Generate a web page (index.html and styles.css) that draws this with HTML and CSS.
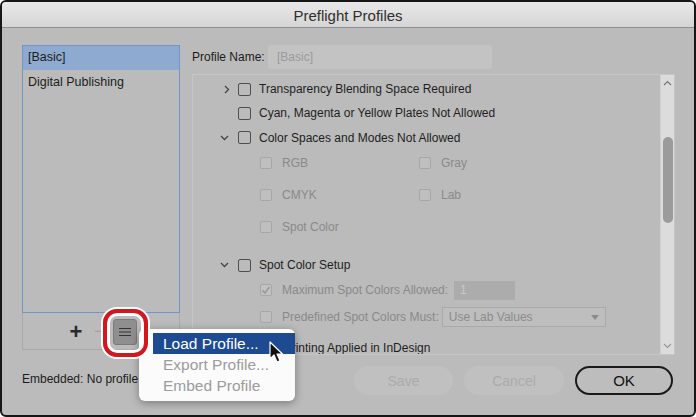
FILE: index.html
```html
<!DOCTYPE html>
<html lang="en">
<head>
  <meta charset="UTF-8">
  <title>Preflight Profiles</title>
  <link rel="stylesheet" href="styles.css">
</head>
<body>

<div class="dialog">
  <div class="titlebar">Preflight Profiles</div>

  <div class="main">
    <div class="left-col">
      <div class="profile-list">
        <div class="list-row selected">[Basic]</div>
        <div class="list-row">Digital Publishing</div>
      </div>
      <div class="list-tools">
        <span class="tool-plus">+</span>
        <span class="tool-minus">&minus;</span>
        <span class="tool-menu">
          <svg width="14" height="10" viewBox="0 0 14 10"><path d="M1 1.5h12M1 5h12M1 8.5h12" stroke="#333" stroke-width="1.2"/></svg>
        </span>
      </div>
      <div class="embedded">Embedded: No profile</div>
    </div>

    <div class="right-col">
      <div class="name-row">
        <label class="name-label">Profile Name:</label>
        <div class="name-field">[Basic]</div>
      </div>

      <div class="panel">
        <div class="panel-content">
          <div class="row r1">
            <span class="chev closed"><svg width="6" height="9" viewBox="0 0 6 9"><path d="M1 1l3.5 3.5L1 8" fill="none" stroke="#444" stroke-width="1.3"/></svg></span>
            <span class="cb"></span>
            <span class="label">Transparency Blending Space Required</span>
          </div>
          <div class="row r2">
            <span class="chev"></span>
            <span class="cb"></span>
            <span class="label">Cyan, Magenta or Yellow Plates Not Allowed</span>
          </div>
          <div class="row r3">
            <span class="chev"><svg width="9" height="6" viewBox="0 0 9 6"><path d="M1 1l3.5 3.5L8 1" fill="none" stroke="#444" stroke-width="1.3"/></svg></span>
            <span class="cb"></span>
            <span class="label">Color Spaces and Modes Not Allowed</span>
          </div>

          <div class="sub-grid">
            <div class="sub-item"><span class="cb small off"></span><span class="dim">RGB</span></div>
            <div class="sub-item"><span class="cb small off"></span><span class="dim">Gray</span></div>
            <div class="sub-item"><span class="cb small off"></span><span class="dim">CMYK</span></div>
            <div class="sub-item"><span class="cb small off"></span><span class="dim">Lab</span></div>
            <div class="sub-item"><span class="cb small off"></span><span class="dim">Spot Color</span></div>
          </div>

          <div class="row r-spot">
            <span class="chev"><svg width="9" height="6" viewBox="0 0 9 6"><path d="M1 1l3.5 3.5L8 1" fill="none" stroke="#444" stroke-width="1.3"/></svg></span>
            <span class="cb"></span>
            <span class="label">Spot Color Setup</span>
          </div>
          <div class="sub-row r-max">
            <span class="cb small off checked">
              <svg width="10" height="9" viewBox="0 0 10 9"><path d="M1.5 4.5l2.5 2.5 4.5-6" fill="none" stroke="#9c9c9c" stroke-width="1.8"/></svg>
            </span>
            <span class="dim">Maximum Spot Colors Allowed:</span>
            <span class="num-field">1</span>
          </div>
          <div class="sub-row r-pre">
            <span class="cb small off"></span>
            <span class="dim">Predefined Spot Colors Must:</span>
            <span class="select-field">Use Lab Values
              <svg width="8" height="5" viewBox="0 0 8 5"><path d="M0 0h8L4 5z" fill="#8c8c8c"/></svg>
            </span>
          </div>
          <div class="row r-over">
            <span class="chev"></span>
            <span class="cb"></span>
            <span class="label">Overprinting Applied in InDesign</span>
          </div>
        </div>

        <div class="scrollbar">
          <svg class="arrow-up" width="9" height="6" viewBox="0 0 9 6"><path d="M1 5l3.5-3.5L8 5" fill="none" stroke="#777" stroke-width="1.2"/></svg>
          <div class="thumb"></div>
          <svg class="arrow-down" width="9" height="6" viewBox="0 0 9 6"><path d="M1 1l3.5 3.5L8 1" fill="none" stroke="#999" stroke-width="1.2"/></svg>
        </div>
      </div>

      <div class="buttons">
        <button class="btn disabled save">Save</button>
        <button class="btn disabled cancel">Cancel</button>
        <button class="btn ok">OK</button>
      </div>
    </div>
  </div>

  <!-- callout ring around the panel menu button -->
  <div class="ring"></div>

  <div class="popup-menu">
    <div class="menu-item active">Load Profile...</div>
    <div class="menu-item">Export Profile...</div>
    <div class="menu-item">Embed Profile</div>
  </div>

  <svg class="cursor" width="14" height="22" viewBox="0 0 14 22">
    <path d="M1 1v17l4-4 3 7 3-1.3-3-6.7h5.5z" fill="#111" stroke="#fff" stroke-width="1.2" stroke-linejoin="round"/>
  </svg>
</div>

</body>
</html>
```

FILE: styles.css
```css
body {
  margin: 0;
  background-color: #fff;
  font-family: "Liberation Sans", Arial, sans-serif;
}
.dialog {
  position: relative;
  width: 696px;
  height: 417px;
  box-sizing: border-box;
  border: 2px solid #161616;
  border-radius: 6px;
  background-color: #bbbbbb;
  overflow: hidden;
}
.titlebar {
  height: 25px;
  line-height: 27px;
  text-align: center;
  font-size: 15px;
  color: #2e2e2e;
  background: linear-gradient(#e9e9e9, #d5d5d5);
  border-bottom: 1px solid #8f8f8f;
}
.main {
  display: flex;
  gap: 12px;
  padding: 17px 19px 0 20px;
}

/* left column */
.left-col {
  width: 158px;
  flex-shrink: 0;
}
.profile-list {
  height: 266px;
  border: 1px solid #6f98c9;
}
.list-row {
  height: 24px;
  line-height: 24px;
  padding-left: 5px;
  font-size: 12.5px;
  color: #1c1c1c;
}
.list-row.selected {
  line-height: 22px;
  background-color: #8eaad0;
}
.list-tools {
  height: 37px;
  border: 1px solid #a9a9a9;
  border-top: none;
  display: flex;
  align-items: center;
  padding-left: 46px;
  padding-top: 2px;
  box-sizing: border-box;
}
.tool-plus {
  width: 14px;
  font-size: 22px;
  line-height: 22px;
  font-weight: bold;
  color: #2a2a2a;
  text-align: center;
}
.tool-minus {
  width: 10px;
  margin-left: 11px;
  font-size: 17px;
  color: #a2a2a2;
}
.tool-menu {
  width: 24px;
  height: 26px;
  margin-left: 9px;
  box-sizing: border-box;
  border: 1px solid #7b7b7b;
  border-radius: 3px;
  background-color: #8f8f8f;
  display: flex;
  align-items: center;
  justify-content: center;
}
.embedded {
  margin-top: 21px;
  font-size: 12px;
  line-height: 16px;
  color: #1c1c1c;
  white-space: nowrap;
}

/* right column */
.right-col {
  flex: 1;
}
.name-row {
  display: flex;
  align-items: center;
  height: 24px;
}
.name-label {
  width: 76px;
  font-size: 12px;
  color: #1c1c1c;
}
.name-field {
  width: 215px;
  height: 24px;
  line-height: 24px;
  padding-left: 9px;
  border-radius: 3px;
  background-color: #c3c3c3;
  font-size: 12px;
  color: #9b9b9b;
}
.panel {
  display: flex;
  height: 281px;
  margin-top: 5px;
  box-sizing: border-box;
  border: 1px solid #c6c6c6;
}
.panel-content {
  flex: 1;
  padding-left: 24px;
  padding-top: 2px;
  overflow: hidden;
}
.row {
  display: flex;
  align-items: center;
  height: 24px;
  font-size: 12px;
  color: #1e1e1e;
  white-space: nowrap;
}
.r3 {
  height: 25px;
}
.chev {
  width: 14px;
  margin-right: 7px;
  display: flex;
  justify-content: center;
  align-items: center;
}
.chev.closed {
  padding-left: 5px;
  box-sizing: border-box;
}
.cb {
  width: 13px;
  height: 13px;
  box-sizing: border-box;
  border: 1px solid #4e4e4e;
  border-radius: 2px;
  margin-right: 8px;
  flex-shrink: 0;
}
.cb.small {
  width: 12px;
  height: 12px;
  margin-right: 10px;
}
.cb.off {
  border-color: #a7a7a7;
  background-color: #bfbfbf;
}
.cb.checked {
  display: flex;
  align-items: center;
  justify-content: center;
  background-color: #c2c2c2;
}
.dim {
  color: #8a8a8a;
}
.sub-grid {
  display: grid;
  grid-template-columns: 159px auto;
  grid-auto-rows: 32px;
  margin-top: -3px;
  padding-left: 43px;
  font-size: 12px;
}
.sub-item {
  display: flex;
  align-items: center;
}
.r-spot {
  margin-top: 10px;
}
.sub-row {
  display: flex;
  align-items: center;
  padding-left: 43px;
  font-size: 12px;
  white-space: nowrap;
}
.r-max {
  height: 26px;
}
.r-pre {
  height: 28px;
}
.num-field {
  width: 61px;
  height: 19px;
  line-height: 19px;
  margin-left: 6px;
  padding-left: 6px;
  box-sizing: border-box;
  background-color: #acacac;
  color: #c9c9c9;
}
.select-field {
  width: 164px;
  height: 20px;
  margin-left: 3px;
  padding: 0 6px;
  box-sizing: border-box;
  display: flex;
  align-items: center;
  justify-content: space-between;
  border: 1px solid #aaaaaa;
  background-color: #bebebe;
  color: #8c8c8c;
}
.r-over {
  height: 14px;
  margin-top: 10px;
}
.scrollbar {
  width: 13px;
  background-color: #dcdcdc;
  border-left: 1px solid #cfcfcf;
  display: flex;
  flex-direction: column;
  align-items: center;
}
.arrow-up {
  margin-top: 5px;
}
.thumb {
  width: 10px;
  height: 86px;
  margin-top: 51px;
  border-radius: 5px;
  background-color: #9b9b9b;
}
.arrow-down {
  margin-top: auto;
  margin-bottom: 5px;
}
.buttons {
  display: flex;
  justify-content: flex-end;
  gap: 11px;
  margin-top: 11px;
  padding-right: 2px;
}
.btn {
  height: 29px;
  border-radius: 15px;
  font-family: "Liberation Sans", Arial, sans-serif;
  font-size: 14px;
  padding: 0;
}
.btn.disabled {
  border: none;
  background-color: #c0c0c0;
  color: #ababab;
}
.save {
  width: 99px;
}
.cancel {
  width: 100px;
}
.ok {
  width: 98px;
  border: 2px solid #1a1a1a;
  background-color: #bdbdbd;
  color: #111;
  font-size: 15px;
}

/* overlays */
.ring {
  position: absolute;
  left: 101px;
  top: 307px;
  width: 37px;
  height: 40px;
  border: 4px solid #d4161e;
  border-radius: 14px;
  box-shadow: inset 0 0 0 3px #fff, 0 0 0 2px #fff;
  z-index: 3;
}
.popup-menu {
  position: absolute;
  left: 137px;
  top: 327px;
  width: 156px;
  height: 72px;
  padding-top: 4px;
  box-sizing: border-box;
  border-radius: 6px;
  background-color: #fbfbfb;
  box-shadow: 0 2px 8px rgba(0, 0, 0, 0.35);
  z-index: 2;
}
.menu-item {
  height: 21px;
  line-height: 21px;
  padding-left: 24px;
  font-size: 15.5px;
  color: #9c9c9c;
  white-space: nowrap;
}
.menu-item.active {
  margin-left: 14px;
  padding-left: 10px;
  background-color: #1d4a91;
  color: #fff;
}
.cursor {
  position: absolute;
  left: 267px;
  top: 339px;
  z-index: 4;
}
```
